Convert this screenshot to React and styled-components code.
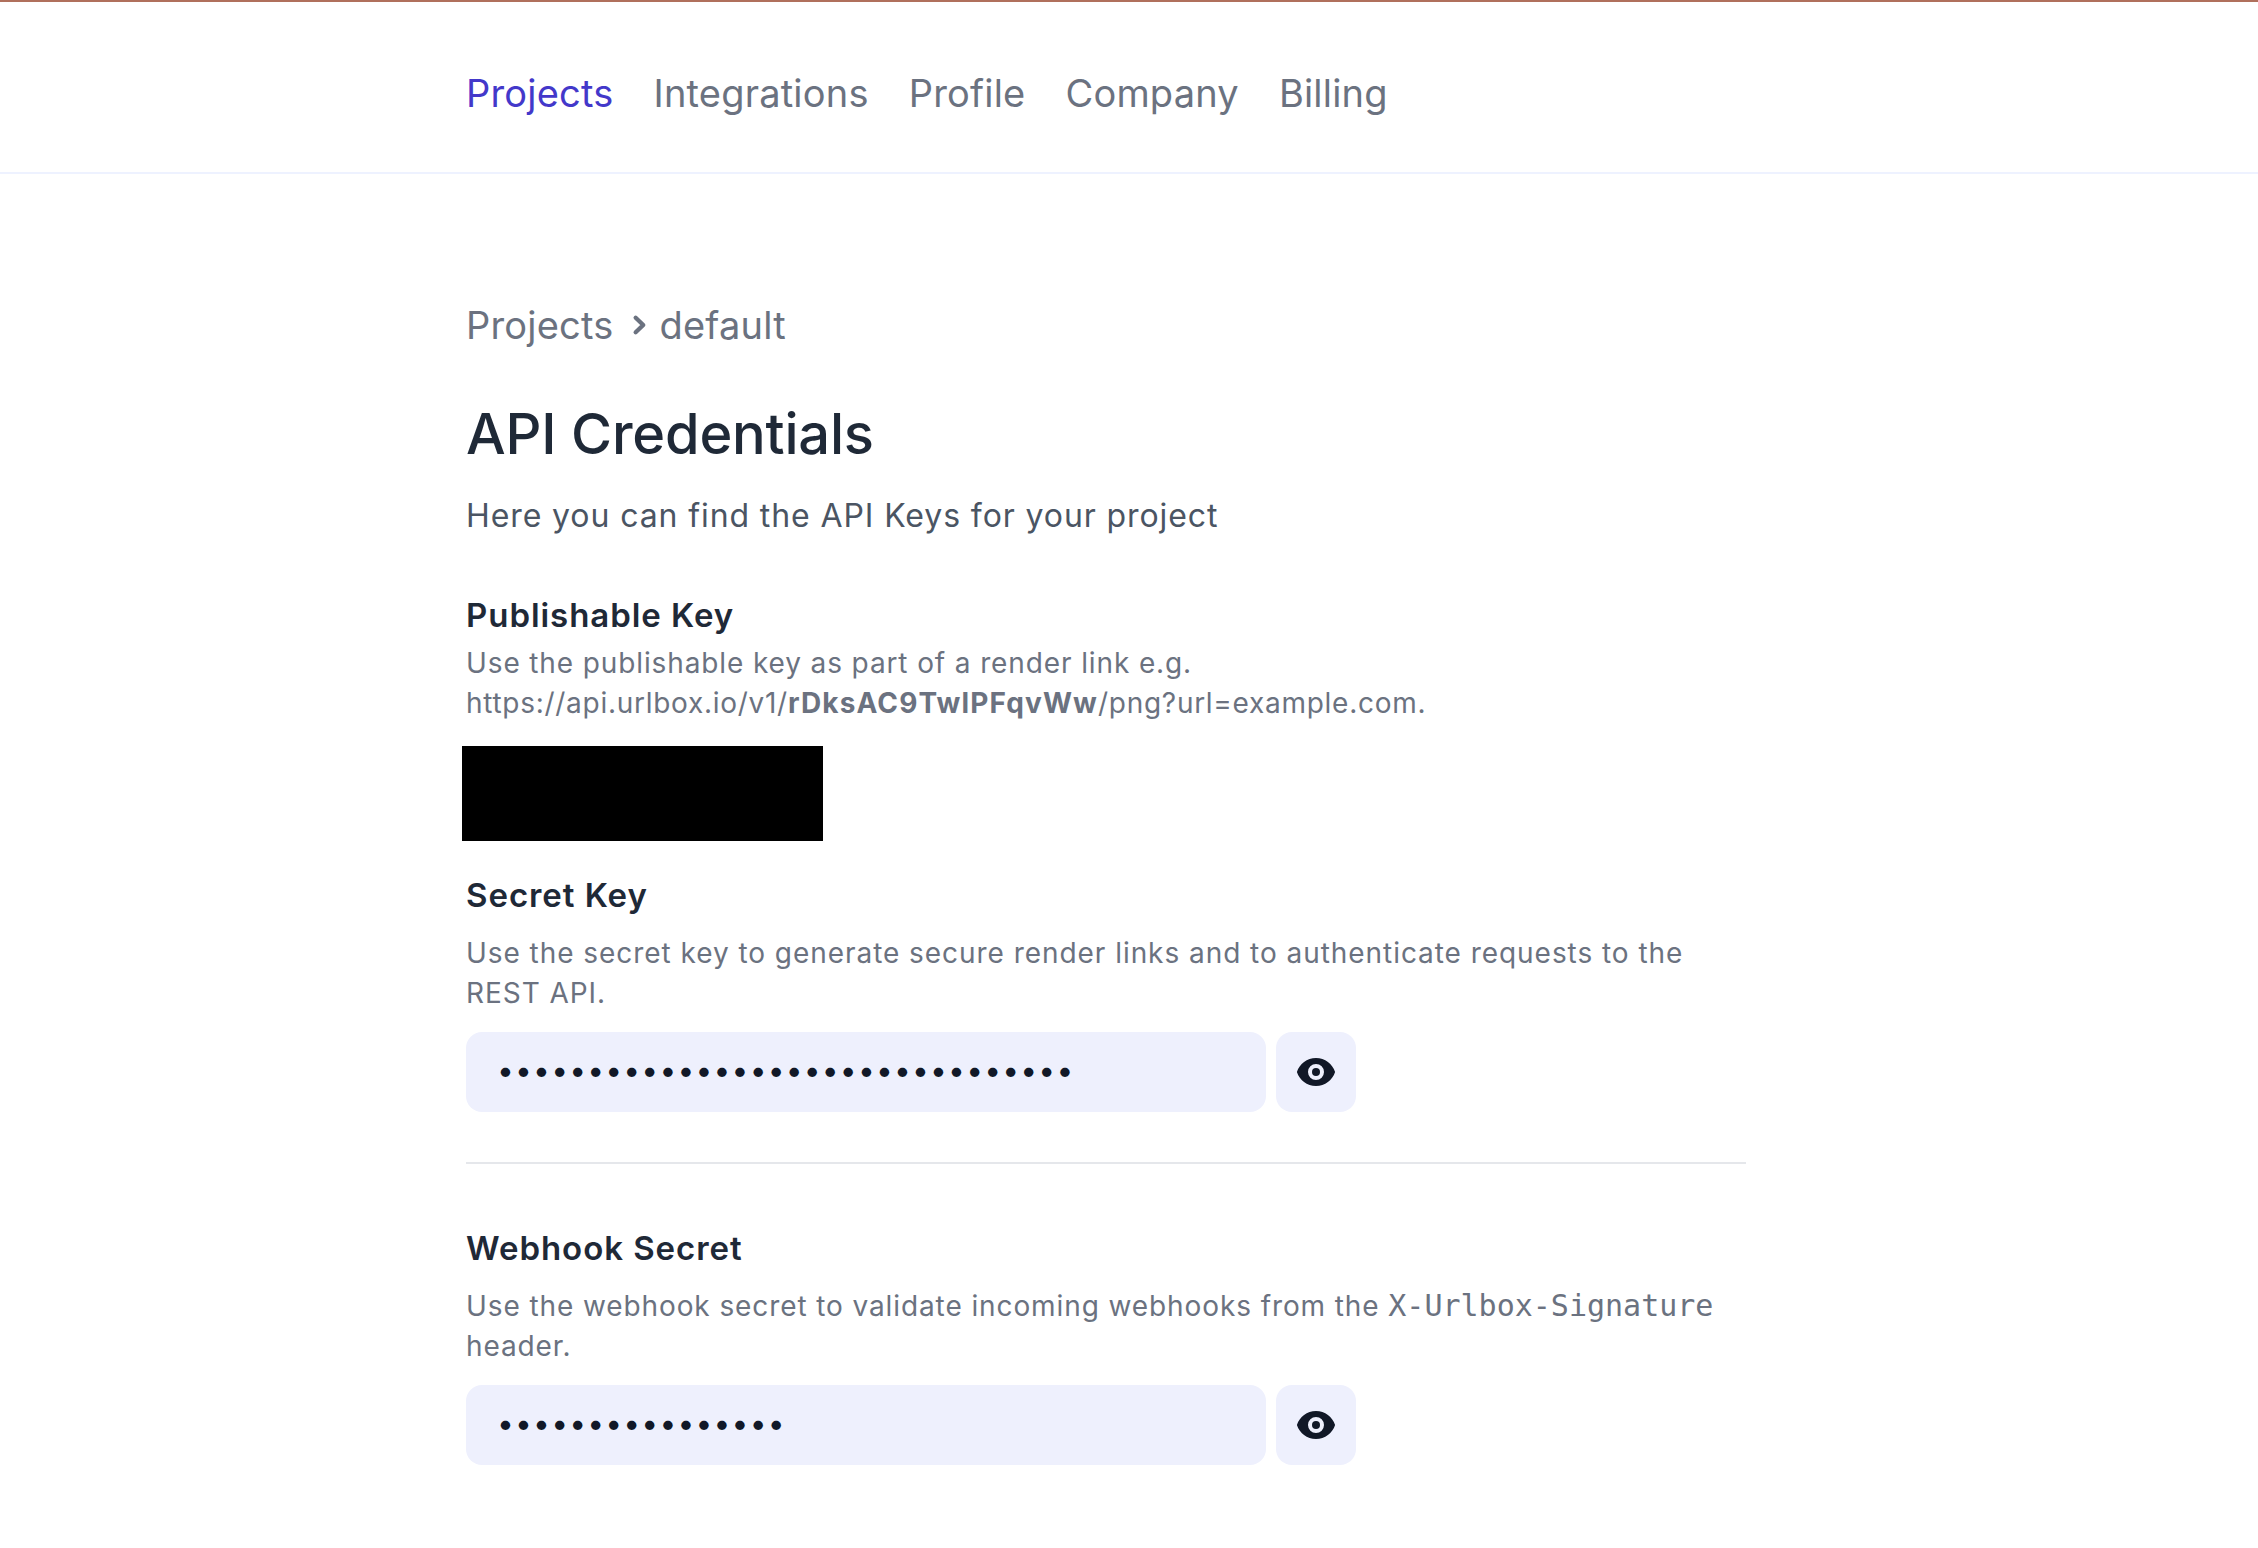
import React from 'react';
import styled, { createGlobalStyle } from 'styled-components';

const GlobalStyle = createGlobalStyle`
  * { box-sizing: border-box; }
  html, body { margin: 0; padding: 0; background: #fff; }
  body { font-family: Inter, "Liberation Sans", sans-serif; }
`;

const Page = styled.div`
  min-height: 1548px;
  background: #fff;
  border-top: 2px solid #b0705c;
`;

const TopNav = styled.nav`
  height: 172px;
  border-bottom: 2px solid #eef2ff;
  padding: 12px 0 0 466px;
  display: flex;
  align-items: center;
  gap: 40px;
`;

const NavLink = styled.a`
  font-size: 38px;
  line-height: 56px;
  letter-spacing: 0.2px;
  color: ${props => props.active ? '#4338ca' : '#6b7280'};
`;

const Main = styled.main`
  width: 1280px;
  margin-left: 466px;
  padding-top: 123px;
`;

const Breadcrumb = styled.div`
  display: flex;
  align-items: center;
  font-size: 38px;
  line-height: 56px;
  letter-spacing: 0.2px;
  color: #6b7280;

  svg {
    margin: 0 2px 0 8px;
  }
`;

const Title = styled.h1`
  margin: 45px 0 0;
  font-size: 56px;
  line-height: 72px;
  font-weight: 500;
  letter-spacing: -0.2px;
  color: #1f2937;
`;

const Subtitle = styled.p`
  margin: 22px 0 0;
  font-size: 32px;
  line-height: 48px;
  letter-spacing: 0.9px;
  color: #4b5563;
`;

const Section = styled.section`
  margin-top: ${props => props.top}px;
`;

const KeyName = styled.h2`
  margin: 0;
  font-size: 33px;
  line-height: 48px;
  font-weight: 600;
  letter-spacing: 0.95px;
  color: #1f2937;
`;

const Description = styled.p`
  margin: ${props => props.top}px 0 0;
  font-size: 28px;
  line-height: 40px;
  letter-spacing: ${props => props.tracking || 0.88}px;
  color: #6b7280;
`;

const UrlPart = styled.span`
  letter-spacing: 0.72px;
`;

const UrlKey = styled.b`
  letter-spacing: 1.13px;
`;

const Code = styled.code`
  font-family: "DejaVu Sans Mono", monospace;
  font-size: 30px;
  letter-spacing: 0;
`;

const Redacted = styled.div`
  width: 361px;
  height: 95px;
  margin: 23px 0 0 -4px;
  background: #000;
`;

const SecretRow = styled.div`
  display: flex;
  gap: 10px;
  margin-top: 19px;
`;

const SecretInput = styled.input`
  width: 800px;
  height: 80px;
  padding: 0 31px 4px;
  border: 0;
  border-radius: 16px;
  background: #eef0fd;
  color: #111827;
  font-family: Inter, sans-serif;
  font-size: 30px;
  letter-spacing: 1.17px;
  outline: none;
`;

const EyeButton = styled.button`
  width: 80px;
  height: 80px;
  padding: 0;
  border: 0;
  border-radius: 16px;
  background: #eef0fd;
  color: #111827;
  display: flex;
  align-items: center;
  justify-content: center;
`;

const Divider = styled.hr`
  height: 2px;
  margin: 50px 0 0;
  border: 0;
  background: #e5e7eb;
`;

const EyeIcon = () => (
  <svg width="40" height="40" viewBox="0 0 20 20" fill="currentColor">
    <path d="M10 12a2 2 0 100-4 2 2 0 000 4z" />
    <path fillRule="evenodd" clipRule="evenodd" d="M.458 10C1.732 5.943 5.522 3 10 3s8.268 2.943 9.542 7c-1.274 4.057-5.064 7-9.542 7S1.732 14.057.458 10zM14 10a4 4 0 11-8 0 4 4 0 018 0z" />
  </svg>
);

const ChevronIcon = () => (
  <svg width="36" height="36" viewBox="0 0 20 20" fill="none" stroke="currentColor" strokeWidth="2.4" strokeLinecap="round" strokeLinejoin="round">
    <path d="M7.6 6l4.2 4-4.2 4" />
  </svg>
);

const Secret = ({ length }) => (
  <SecretRow>
    <SecretInput type="password" readOnly value={'x'.repeat(length)} />
    <EyeButton type="button" aria-label="Show secret"><EyeIcon /></EyeButton>
  </SecretRow>
);

const links = ['Projects', 'Integrations', 'Profile', 'Company', 'Billing'];

export default function App() {
  return (
    <Page>
      <GlobalStyle />
      <TopNav>
        {links.map((link, i) => <NavLink key={link} active={i === 0}>{link}</NavLink>)}
      </TopNav>
      <Main>
        <Breadcrumb>Projects<ChevronIcon />default</Breadcrumb>
        <Title>API Credentials</Title>
        <Subtitle>Here you can find the API Keys for your project</Subtitle>
        <Section top={51}>
          <KeyName>Publishable Key</KeyName>
          <Description top={4}>
            Use the publishable key as part of a render link e.g.<br />
            <UrlPart>https://api.urlbox.io/v1/</UrlPart><UrlKey>rDksAC9TwlPFqvWw</UrlKey><UrlPart>/png?url=example.com.</UrlPart>
          </Description>
          <Redacted />
        </Section>
        <Section top={30}>
          <KeyName>Secret Key</KeyName>
          <Description top={14} tracking={0.95}>
            Use the secret key to generate secure render links and to authenticate requests to the REST API.
          </Description>
          <Secret length={32} />
          <Divider />
        </Section>
        <Section top={60}>
          <KeyName>Webhook Secret</KeyName>
          <Description top={14} tracking={0.9}>
            Use the webhook secret to validate incoming webhooks from the <Code>X-Urlbox-Signature</Code> header.
          </Description>
          <Secret length={16} />
        </Section>
      </Main>
    </Page>
  );
}
